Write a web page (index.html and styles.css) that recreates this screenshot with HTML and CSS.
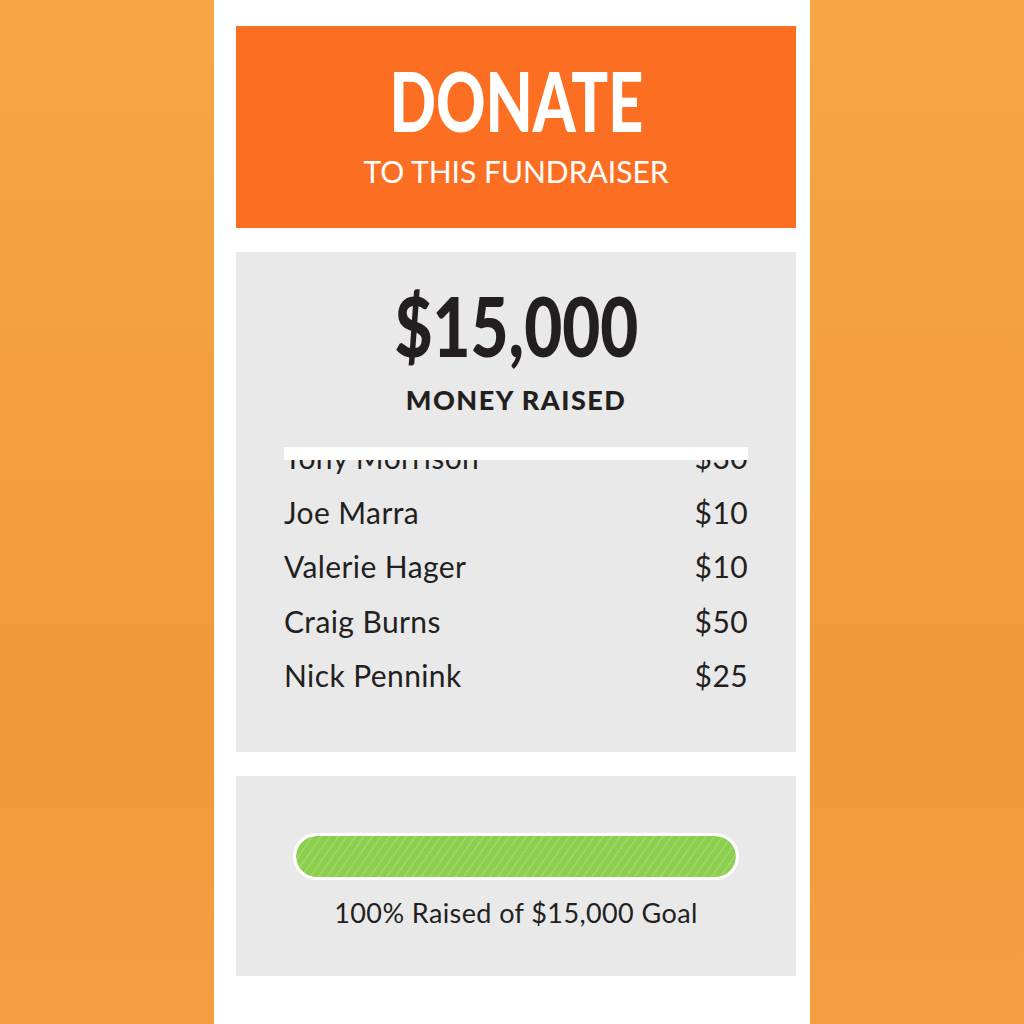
FILE: index.html
```html
<!DOCTYPE html>
<html lang="en">
<head>
  <meta charset="UTF-8" />
  <meta name="viewport" content="width=device-width, initial-scale=1" />
  <title>Donate – Fundraiser</title>
  <link rel="stylesheet" href="styles.css">
</head>
<body>
  <main class="column">
    <section class="donate">
      <h1><span>DONATE</span></h1>
      <p>TO THIS FUNDRAISER</p>
    </section>

    <section class="raised">
      <div class="total"><span>$15,000</span></div>
      <div class="total-label">MONEY RAISED</div>

      <div class="donors">
        <div class="donors-fade"></div>
        <ul class="donor-list">
          <li><span>Tony Morrison</span><span>$30</span></li>
          <li><span>Joe Marra</span><span>$10</span></li>
          <li><span>Valerie Hager</span><span>$10</span></li>
          <li><span>Craig Burns</span><span>$50</span></li>
          <li><span>Nick Pennink</span><span>$25</span></li>
        </ul>
      </div>
    </section>

    <section class="goal">
      <div class="progress"><div class="progress-fill" style="width: 100%;"></div></div>
      <p>100% Raised of $15,000 Goal</p>
    </section>
  </main>
</body>
</html>
```

FILE: styles.css
```css
* {
  margin: 0; padding: 0; box-sizing: border-box;
}
body {
  background: linear-gradient(180deg, #f6a645 0%, #f2a040 40%, #f0993a 70%, #f39f42 100%);
  min-height: 100vh;
  font-family: Lato, 'Open Sans', sans-serif;
  color: #231f20;
}
.column {
  width: 596px;
  height: 1024px;
  margin: 0 auto;
  background: #fff;
  padding: 26px 14px 0 22px;
  display: flex;
  flex-direction: column;
  gap: 24px;
}

.donate {
  height: 202px;
  background: #fc6f22;
  color: #fff;
  text-align: center;
  padding-top: 33px;
}
/* condensed headline look */
.donate h1 span,
.total span {
  display: inline-block;
  transform: scaleX(0.745);
}
.donate h1 {
  font-weight: 900;
  font-size: 82px;
  line-height: 1;
}
.donate p {
  font-size: 30px;
  line-height: 1;
  margin-top: 15px;
}

.raised {
  height: 500px;
  background: #e9e9e9;
  padding-top: 32px;
  text-align: center;
}
.total {
  font-weight: 900;
  font-size: 82px;
  line-height: 1;
}
.total span {
  transform: scaleX(0.8);
}
.total-label {
  font-weight: 900;
  font-size: 27px;
  letter-spacing: 1.5px;
  line-height: 1;
  margin-top: 20px;
}

.donors {
  position: relative;
  margin-top: 34px;
  height: 270px;
  overflow: hidden;
  padding: 0 48px;
}
.donors-fade {
  position: absolute;
  top: 0; left: 48px; right: 48px;
  height: 13px;
  background: #fff;
  z-index: 2;
}
.donor-list {
  list-style: none;
  margin-top: -17px;
}
.donor-list li {
  display: flex;
  justify-content: space-between;
  font-size: 30px;
  letter-spacing: 0.4px;
  line-height: 54.6px;
}

.goal {
  height: 200px;
  background: #e9e9e9;
  padding: 57px 57px 0;
  text-align: center;
}
.progress {
  height: 47px;
  border: 3px solid #fff;
  border-radius: 24px;
  background: #fff;
  overflow: hidden;
}
.progress-fill {
  height: 100%;
  border-radius: 21px;
  background: repeating-linear-gradient(-55deg, #8ccf4e 0 5px, #9bd664 5px 7px);
}
.goal p {
  font-size: 27px;
  letter-spacing: 0.4px;
  line-height: 1;
  margin-top: 19px;
}
```
